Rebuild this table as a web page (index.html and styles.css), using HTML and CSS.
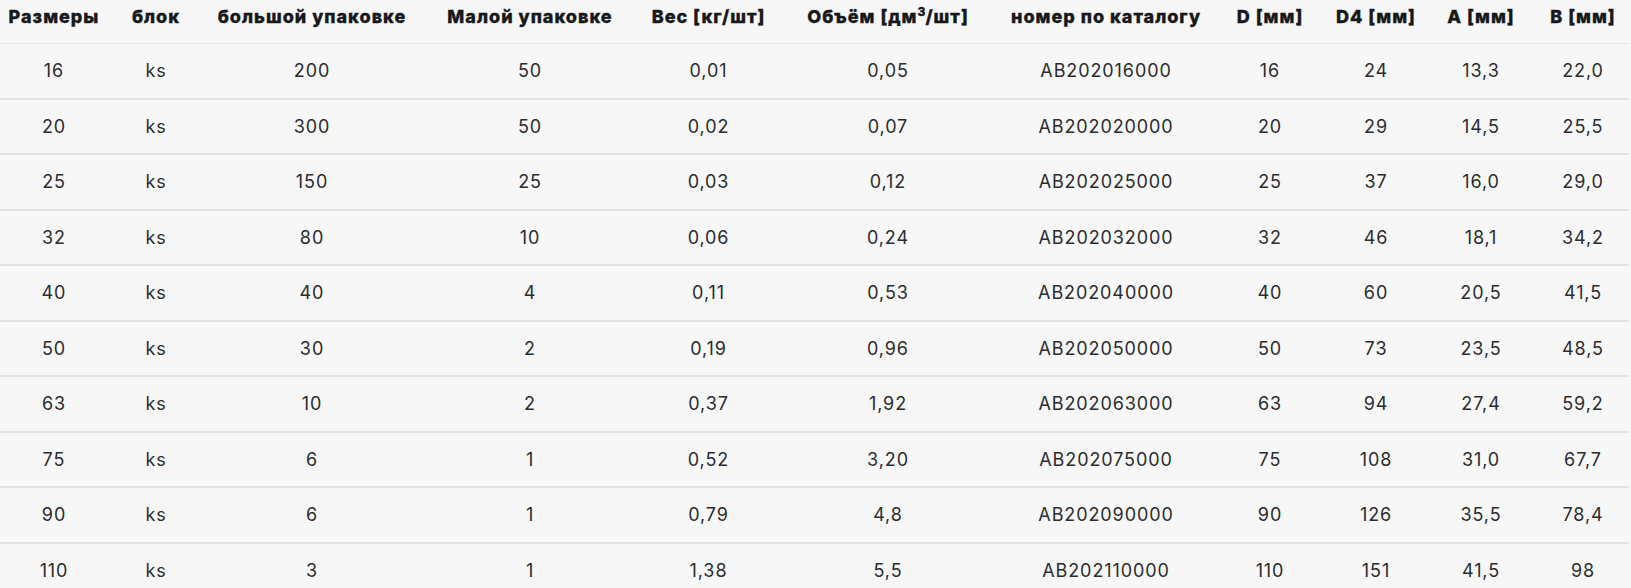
FILE: index.html
```html
<!DOCTYPE html>
<html lang="ru">
<head>
<meta charset="utf-8">
<title>Таблица размеров</title>
<link rel="stylesheet" href="styles.css">
</head>
<body>
<table class="spec">
  <colgroup>
    <col class="c1"><col class="c2"><col class="c3"><col class="c4"><col class="c5"><col class="c6">
    <col class="c7"><col class="c8"><col class="c9"><col class="c10"><col class="c11">
  </colgroup>
  <thead>
    <tr>
      <th>Размеры</th>
      <th>блок</th>
      <th>большой упаковке</th>
      <th>Малой упаковке</th>
      <th>Вес [кг/шт]</th>
      <th>Объём [дм<sup>3</sup>/шт]</th>
      <th>номер по каталогу</th>
      <th>D [мм]</th>
      <th>D4 [мм]</th>
      <th>A [мм]</th>
      <th>B [мм]</th>
    </tr>
  </thead>
  <tbody>
    <tr><td>16</td><td>ks</td><td>200</td><td>50</td><td>0,01</td><td>0,05</td><td>AB202016000</td><td>16</td><td>24</td><td>13,3</td><td>22,0</td></tr>
    <tr><td>20</td><td>ks</td><td>300</td><td>50</td><td>0,02</td><td>0,07</td><td>AB202020000</td><td>20</td><td>29</td><td>14,5</td><td>25,5</td></tr>
    <tr><td>25</td><td>ks</td><td>150</td><td>25</td><td>0,03</td><td>0,12</td><td>AB202025000</td><td>25</td><td>37</td><td>16,0</td><td>29,0</td></tr>
    <tr><td>32</td><td>ks</td><td>80</td><td>10</td><td>0,06</td><td>0,24</td><td>AB202032000</td><td>32</td><td>46</td><td>18,1</td><td>34,2</td></tr>
    <tr><td>40</td><td>ks</td><td>40</td><td>4</td><td>0,11</td><td>0,53</td><td>AB202040000</td><td>40</td><td>60</td><td>20,5</td><td>41,5</td></tr>
    <tr><td>50</td><td>ks</td><td>30</td><td>2</td><td>0,19</td><td>0,96</td><td>AB202050000</td><td>50</td><td>73</td><td>23,5</td><td>48,5</td></tr>
    <tr><td>63</td><td>ks</td><td>10</td><td>2</td><td>0,37</td><td>1,92</td><td>AB202063000</td><td>63</td><td>94</td><td>27,4</td><td>59,2</td></tr>
    <tr><td>75</td><td>ks</td><td>6</td><td>1</td><td>0,52</td><td>3,20</td><td>AB202075000</td><td>75</td><td>108</td><td>31,0</td><td>67,7</td></tr>
    <tr><td>90</td><td>ks</td><td>6</td><td>1</td><td>0,79</td><td>4,8</td><td>AB202090000</td><td>90</td><td>126</td><td>35,5</td><td>78,4</td></tr>
    <tr><td>110</td><td>ks</td><td>3</td><td>1</td><td>1,38</td><td>5,5</td><td>AB202110000</td><td>110</td><td>151</td><td>41,5</td><td>98</td></tr>
  </tbody>
</table>
</body>
</html>
```

FILE: styles.css
```css
html, body {
  margin: 0;
  padding: 0;
  background: #f7f7f7;
}

body {
  font-family: Inter, "Noto Sans", "Liberation Sans", sans-serif;
  color: #2a2c2e;
}

.spec {
  width: 1629px;
  table-layout: fixed;
  border-collapse: collapse;
  border-spacing: 0;
}

.c1 { width: 108px; }
.c2 { width: 96px; }
.c3 { width: 216px; }
.c4 { width: 220px; }
.c5 { width: 137px; }
.c6 { width: 222px; }
.c7 { width: 214px; }
.c8 { width: 114px; }
.c9 { width: 98px; }
.c10 { width: 112px; }
.c11 { width: 92px; }

.spec th {
  font-size: 18px;
  font-weight: 800;
  letter-spacing: 1px;
  -webkit-text-stroke: 0.35px currentColor;
  line-height: 25.5px;
  color: #16181a;
  text-align: center;
  white-space: nowrap;
  padding: 3.6px 0 14px;
  border-bottom: 1px solid #e3e5e7;
}

.spec th sup {
  font-size: 12px;
  line-height: 0;
  letter-spacing: 0;
  vertical-align: 7px;
}

.spec td {
  font-size: 18px;
  font-weight: 400;
  letter-spacing: 0.9px;
  line-height: 27px;
  text-align: center;
  white-space: nowrap;
  padding: 13.25px 0;
  border-bottom: 2px solid #dfe2e5;
}
```
